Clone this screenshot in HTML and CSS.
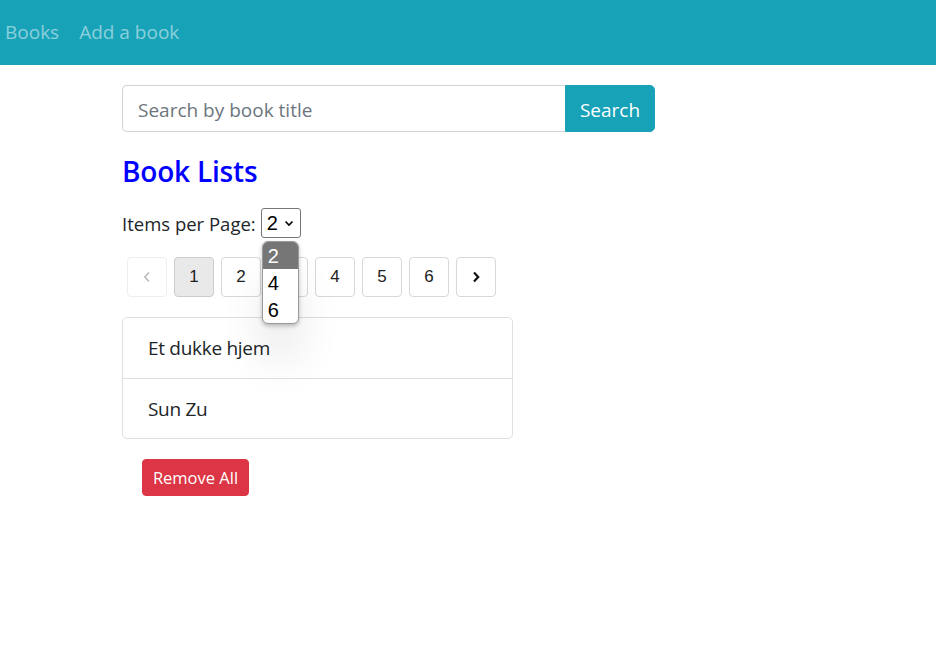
FILE: index.html
```html
<!DOCTYPE html>
<html lang="en">
<head>
<meta charset="utf-8">
<title>Books</title>
<link rel="stylesheet" href="styles.css">
</head>
<body>
<nav class="navbar">
  <a class="nav-link" href="#">Books</a>
  <a class="nav-link" href="#">Add a book</a>
</nav>
<main class="content">
  <form class="search">
    <input class="search-input" type="text" placeholder="Search by book title">
    <button class="search-btn" type="button">Search</button>
  </form>
  <h3 class="title">Book Lists</h3>
  <div class="per-page">
    <span class="per-page-label">Items per Page:</span>
    <span class="select">
      <span class="select-value">2</span>
      <svg class="select-chev" width="10" height="7" viewBox="0 0 10 7"><path d="M1.5 1.5 L5 5 L8.5 1.5" fill="none" stroke="#000" stroke-width="1.6"/></svg>
      <span class="select-popup">
        <span class="opt opt-active">2</span>
        <span class="opt">4</span>
        <span class="opt">6</span>
      </span>
    </span>
  </div>
  <ul class="pagination">
    <li class="page disabled"><svg width="10" height="12" viewBox="0 0 10 12"><path d="M7 1.5 L2.8 6 L7 10.5" fill="none" stroke="#bbb" stroke-width="1.6"/></svg></li>
    <li class="page active">1</li>
    <li class="page">2</li>
    <li class="page">3</li>
    <li class="page">4</li>
    <li class="page">5</li>
    <li class="page">6</li>
    <li class="page"><svg width="10" height="12" viewBox="0 0 10 12"><path d="M3 1.5 L7.2 6 L3 10.5" fill="none" stroke="#111" stroke-width="2.2"/></svg></li>
  </ul>
  <ul class="list-group">
    <li class="list-item">Et dukke hjem</li>
    <li class="list-item">Sun Zu</li>
  </ul>
  <button class="remove-btn" type="button">Remove All</button>
</main>
</body>
</html>
```
FILE: styles.css
```css
* { box-sizing: border-box; }
body {
  margin: 0;
  font-family: "Open Sans", "Noto Sans", sans-serif;
  color: #212529;
  background: #fff;
}
.navbar {
  height: 65px;
  background: #17a2b8;
  display: flex;
  align-items: center;
  padding-left: 5px;
  padding-bottom: 2px;
  gap: 20px;
}
.nav-link {
  color: rgba(255,255,255,0.5);
  text-decoration: none;
  font-size: 19px;
}
.content {
  padding-left: 122px;
}
.search {
  margin-top: 20px;
  display: flex;
  width: 533px;
  height: 47px;
}
.search-input {
  flex: 1;
  min-width: 0;
  border: 1px solid #ced4da;
  border-right: none;
  border-radius: 5px 0 0 5px;
  padding: 3px 15px 0;
  font-family: inherit;
  font-size: 19px;
  color: #495057;
  outline: none;
}
.search-input::placeholder { color: #6c757d; }
.search-btn {
  width: 90px;
  background: #17a2b8;
  border: 1px solid #17a2b8;
  border-radius: 0 5px 5px 0;
  color: #fff;
  font-family: inherit;
  font-size: 19px;
  padding: 3px 0 0;
}
.title {
  margin: 22px 0 0;
  height: 34px;
  line-height: 34px;
  font-size: 28px;
  font-weight: 600;
  color: #0000ff;
  letter-spacing: -0.2px;
}
.per-page {
  margin-top: 20px;
  height: 30px;
  display: flex;
  align-items: center;
  gap: 5px;
}
.per-page-label {
  font-size: 18.5px;
  color: #212529;
}
.select {
  position: relative;
  width: 40px;
  height: 30px;
  border: 1px solid #767676;
  border-radius: 3px;
  display: flex;
  align-items: center;
  padding-left: 5px;
  gap: 6px;
  font-family: "Liberation Sans", Arial, sans-serif;
  font-size: 20px;
  color: #000;
}
.select-value { line-height: 1; }
.select-popup {
  position: absolute;
  left: 0;
  top: 32px;
  width: 37px;
  height: 83px;
  background: #fff;
  border: 1px solid #9a9a9a;
  border-radius: 6px;
  overflow: hidden;
  display: flex;
  flex-direction: column;
  box-shadow: 0 2px 4px rgba(0,0,0,0.25), 0 40px 45px -5px rgba(0,0,0,0.13);
  z-index: 5;
}
.opt {
  height: 27px;
  line-height: 29px;
  padding-left: 5px;
  font-size: 20px;
  color: #000;
}
.opt-active {
  background: #767676;
  color: #fff;
}
.pagination {
  list-style: none;
  margin: 19px 0 0;
  padding: 0 0 0 5px;
  display: flex;
  gap: 7px;
}
.page {
  width: 40px;
  height: 40px;
  border: 1px solid #d8d8d8;
  border-radius: 4px;
  display: flex;
  align-items: center;
  justify-content: center;
  font-family: "Liberation Sans", Arial, sans-serif;
  font-size: 17px;
  color: #222;
  background: #fff;
}
.page.disabled { border-color: #eee; }
.page.active { background: #e9e9e9; border-color: #ccc; }
.list-group {
  list-style: none;
  margin: 20px 0 0;
  padding: 0;
  width: 391px;
  border: 1px solid #dfdfdf;
  border-radius: 5px;
}
.list-item {
  height: 60px;
  display: flex;
  align-items: center;
  padding-left: 25px;
  font-size: 19px;
  letter-spacing: -0.3px;
  color: #212529;
}
.list-item + .list-item { border-top: 1px solid #dfdfdf; }
.remove-btn {
  margin: 20px 0 0 20px;
  width: 107px;
  height: 37px;
  background: #dc3545;
  border: 1px solid #dc3545;
  border-radius: 4px;
  color: #fff;
  font-family: inherit;
  font-size: 16.5px;
  padding: 0;
}
```
